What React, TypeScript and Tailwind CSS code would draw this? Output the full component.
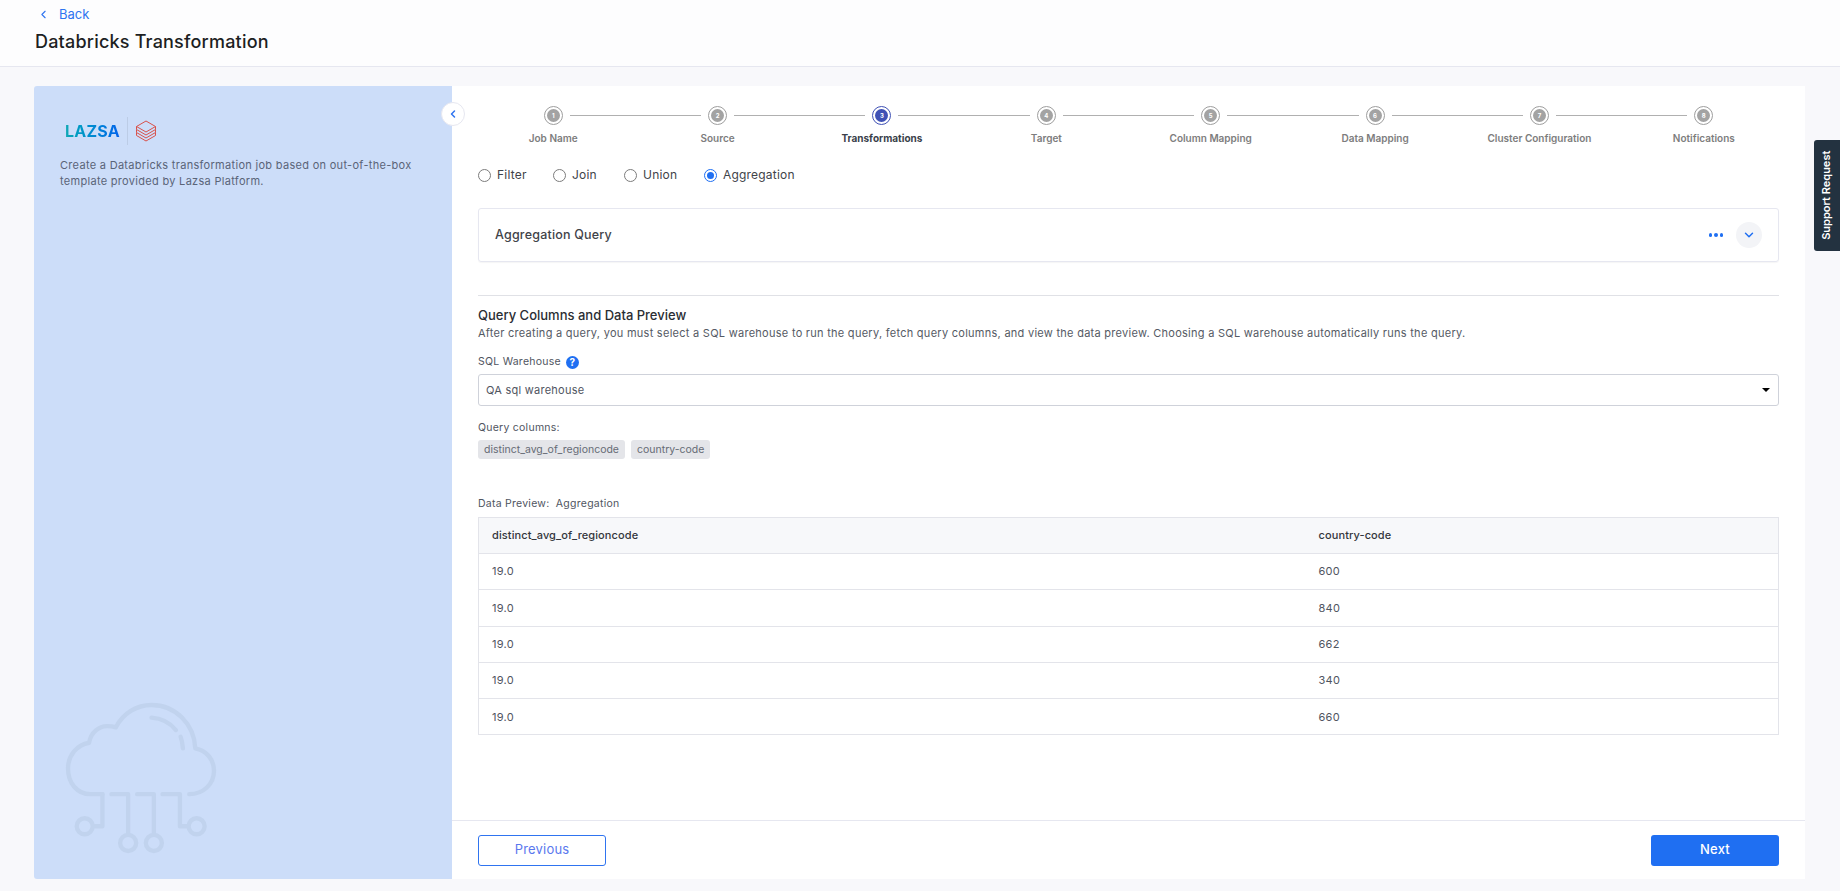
import { ChevronDown, ChevronLeft } from "lucide-react";

const steps = ["Job Name", "Source", "Transformations", "Target", "Column Mapping", "Data Mapping", "Cluster Configuration", "Notifications"];
const radios = [
  { label: "Filter", width: "w-[75px]" },
  { label: "Join", width: "w-[71px]" },
  { label: "Union", width: "w-[80px]" },
  { label: "Aggregation", width: "w-[100px]", checked: true },
];
const rows = ["600", "840", "662", "340", "660"];

function CloudArt() {
  return (
    <svg viewBox="100 60 470 470" className="w-[157px] h-[157px] ml-[29px] mb-[22px] mt-auto" fill="none" stroke="#c1d3ee" strokeWidth="13" strokeLinecap="round" strokeLinejoin="round">
      <path d="M218 342H182C142 342 115 308 115 265C115 226 142 194 178 188C184 156 208 138 232 138C242 138 250 139 258 142C280 100 320 75 365 75C436 75 493 132 496 205C530 212 552 238 552 272C552 312 520 342 478 342" />
      <path d="M218 342V438H195" />
      <circle cx="165" cy="438" r="24" />
      <path d="M245 342H295V462" />
      <circle cx="295" cy="488" r="24" />
      <path d="M322 342H372V462" />
      <circle cx="372" cy="488" r="24" />
      <path d="M398 342H450V438H472" />
      <circle cx="500" cy="438" r="24" />
      <path d="M365 113C395 115 420 128 438 150" />
      <path d="M452 170C456 180 458 192 459 205" />
    </svg>
  );
}

function DatabricksMark() {
  return (
    <svg viewBox="0 0 22 22" className="w-[22px] h-[22px]" fill="none" stroke="#d8514b" strokeWidth="1">
      <path d="M11 1L20.5 6.5L11 12L1.5 6.5Z" />
      <path d="M1.5 6.5V9.5L11 15L20.5 9.5V6.5" />
      <path d="M1.5 9.5V12.5L11 18L20.5 12.5V9.5" />
      <path d="M1.5 12.5V15.5L11 21L20.5 15.5V12.5" />
    </svg>
  );
}

function Step({ index, label, active }: { index: number; label: string; active: boolean }) {
  return (
    <div className="flex flex-col items-center">
      <div className="flex items-center w-full h-[20px]">
        <div className={`flex-1 h-px ${index > 0 ? "bg-[#b0b0b0]" : ""}`} />
        <div className={`mx-[7px] w-[19px] h-[19px] rounded-full border flex items-center justify-center bg-white ${active ? "border-[#3f51b5]" : "border-[#9e9e9e]"}`}>
          <div className={`w-[13px] h-[13px] rounded-full flex items-center justify-center text-white text-[6px] font-bold ${active ? "bg-[#3f51b5]" : "bg-[#a3a3a3]"}`}>
            {index + 1}
          </div>
        </div>
        <div className={`flex-1 h-px ${index < steps.length - 1 ? "bg-[#b0b0b0]" : ""}`} />
      </div>
      <div className={`mt-[6px] text-[10px] leading-[14px] whitespace-nowrap ${active ? "font-bold text-[#3a3f4a]" : "font-semibold text-[#7d7d7d]"}`}>
        {label}
      </div>
    </div>
  );
}

export default function App() {
  return (
    <div className="h-screen flex flex-col bg-[#f8f8fb] font-['Inter',sans-serif] text-[#3b3f46] relative overflow-hidden">
      <header className="h-[67px] shrink-0 bg-[#fdfdfe] border-b border-[#e6e7f0] pl-[35px]">
        <a className="flex items-center pt-[6px] ml-[2px] text-[13px] leading-[16px] text-[#2f74f0]">
          <ChevronLeft className="w-[13px] h-[13px] mr-[9px]" strokeWidth={2} />
          Back
        </a>
        <h1 className="mt-[7px] text-[18px] leading-[26px] font-medium tracking-[0.2px] text-[#1d1f23]">Databricks Transformation</h1>
      </header>

      <main className="flex-1 flex pl-[34px] pr-[35px] pt-[19px] pb-[12px] min-h-0">
        <aside className="w-[418px] shrink-0 bg-[#ccddf9] rounded-l-[3px] flex flex-col relative">
          <div className="flex items-center ml-[31px] mt-[31px] h-[28px]">
            <span className="text-[16px] leading-none font-bold tracking-[0.2px] bg-gradient-to-r from-[#14a9b5] to-[#0a62ea] bg-clip-text text-transparent">LAZSA</span>
            <div className="w-px h-[28px] bg-[#bccce6] ml-[7px] mr-[7px]" />
            <DatabricksMark />
          </div>
          <p className="mt-[12px] ml-[26px] w-[360px] text-[11px] leading-[16px] tracking-[0.3px] text-[#5a6478]">
            Create a Databricks transformation job based on out-of-the-box template provided by Lazsa Platform.
          </p>
          <CloudArt />
          <button className="absolute right-[-13px] top-[16px] w-[24px] h-[24px] rounded-full bg-white border border-[#e6e7f0] flex items-center justify-center text-[#2f74f0]">
            <ChevronLeft className="w-[12px] h-[12px]" strokeWidth={3} />
          </button>
        </aside>

        <section className="flex-1 min-w-0 bg-white flex flex-col">
          <div className="flex-1 min-h-0 px-[26px] pt-[19px]">
            <div className="grid grid-cols-8 -mx-[7px]">
              {steps.map((s, i) => (
                <Step key={s} index={i} label={s} active={i === 2} />
              ))}
            </div>

            <div className="flex items-center mt-[20px] h-[20px] text-[12px] text-[#3f4349] tracking-[0.2px]">
              {radios.map((r) => (
                <label key={r.label} className={`flex items-center shrink-0 ${r.width}`}>
                  <span className={`w-[13px] h-[13px] rounded-full border flex items-center justify-center mr-[6px] ${r.checked ? "border-[#1f6ff2]" : "border-[#7c7c7c]"}`}>
                    {r.checked && <span className="w-[7px] h-[7px] rounded-full bg-[#1f6ff2]" />}
                  </span>
                  {r.label}
                </label>
              ))}
            </div>

            <div className="mt-[23px] h-[54px] border border-[#e6e7f0] rounded-[3px] shadow-[0_1px_1px_rgba(0,0,0,0.04)] flex items-center pl-[16px] pr-[16px]">
              <span className="flex-1 text-[12.5px] font-medium tracking-[0.2px] text-[#3f4349]">Aggregation Query</span>
              <span className="flex gap-[2px] mr-[13px]">
                <i className="w-[3.5px] h-[3.5px] rounded-full bg-[#1f6ff2]" />
                <i className="w-[3.5px] h-[3.5px] rounded-full bg-[#1f6ff2]" />
                <i className="w-[3.5px] h-[3.5px] rounded-full bg-[#1f6ff2]" />
              </span>
              <span className="w-[26px] h-[26px] rounded-full bg-[#f3f4f7] flex items-center justify-center text-[#1f6ff2]">
                <ChevronDown className="w-[14px] h-[14px]" strokeWidth={2.5} />
              </span>
            </div>

            <div className="mt-[33px] border-t border-[#e0e1e6]" />

            <h2 className="mt-[10px] text-[13px] leading-[18px] font-medium text-[#2a2d33]">Query Columns and Data Preview</h2>
            <p className="mt-[1px] text-[11px] leading-[16px] tracking-[0.27px] text-[#555a64]">
              After creating a query, you must select a SQL warehouse to run the query, fetch query columns, and view the data preview. Choosing a SQL warehouse automatically runs the query.
            </p>

            <div className="mt-[13px] flex items-center h-[16px] text-[10.5px] tracking-[0.25px] text-[#50555f]">
              SQL Warehouse
              <span className="ml-[5px] w-[13px] h-[13px] rounded-full bg-[#1f6ff2] text-white text-[10px] font-bold flex items-center justify-center">?</span>
            </div>

            <div className="mt-[4px] h-[32px] border border-[#cfd2da] rounded-[3px] flex items-center justify-between pl-[7px] pr-[8px] text-[11px] tracking-[0.25px] text-[#50555f]">
              QA sql warehouse
              <span className="w-0 h-0 border-x-[4px] border-x-transparent border-t-[4px] border-t-black" />
            </div>

            <div className="mt-[15px] text-[10.5px] leading-[14px] tracking-[0.25px] text-[#50555f]">Query columns:</div>
            <div className="mt-[5px] flex gap-[6px]">
              <span className="h-[19px] px-[6px] rounded-[3px] bg-[#e4e5e9] text-[10.5px] leading-[19px] text-[#666b75]">distinct_avg_of_regioncode</span>
              <span className="h-[19px] px-[6px] rounded-[3px] bg-[#e4e5e9] text-[10.5px] leading-[19px] text-[#666b75]">country-code</span>
            </div>

            <div className="mt-[38px] text-[10.5px] leading-[14px] tracking-[0.25px] text-[#50555f]">Data Preview:&nbsp; Aggregation</div>

            <table className="mt-[6px] w-full table-fixed border-collapse border border-[#e3e4ea] text-[11px]">
              <thead>
                <tr className="h-[36px] bg-[#f7f8fa] border-b border-[#e3e4ea] text-left text-[#33363c]">
                  <th className="w-[827px] pl-[13px] font-medium tracking-[0.1px]">distinct_avg_of_regioncode</th>
                  <th className="pl-[13px] font-medium tracking-[0.1px]">country-code</th>
                </tr>
              </thead>
              <tbody>
                {rows.map((code) => (
                  <tr key={code} className="h-[36.3px] border-b border-[#e3e4ea] text-[#50555f] tracking-[0.25px]">
                    <td className="pl-[13px]">19.0</td>
                    <td className="pl-[13px]">{code}</td>
                  </tr>
                ))}
              </tbody>
            </table>
          </div>

          <footer className="h-[59px] shrink-0 border-t border-[#e6e7f0] flex items-center justify-between px-[26px]">
            <button className="w-[128px] h-[31px] rounded-[3px] border border-[#2f74f0] text-[13px] text-[#5a78ee] tracking-[0.2px]">Previous</button>
            <button className="w-[128px] h-[31px] rounded-[3px] bg-[#1f6ff2] text-[13px] font-medium text-white tracking-[0.2px]">Next</button>
          </footer>
        </section>
      </main>

      <div className="absolute right-0 top-[140px] w-[26px] h-[111px] bg-[#233240] rounded-l-[3px] flex items-center justify-center">
        <span className="-rotate-90 whitespace-nowrap text-[11px] font-semibold text-white">Support Request</span>
      </div>
    </div>
  );
}
